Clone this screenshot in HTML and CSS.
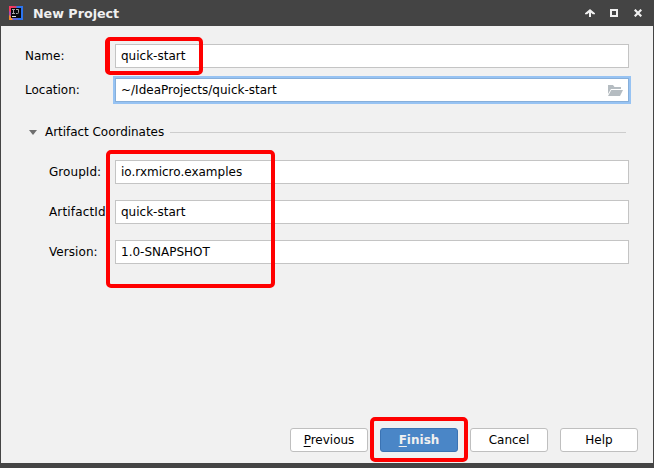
FILE: index.html
```html
<!DOCTYPE html>
<html lang="en">
<head>
<meta charset="utf-8">
<title>New Project</title>
<link rel="stylesheet" href="styles.css">
</head>
<body>
<div class="window">
  <header class="titlebar">
    <svg class="logo" width="14" height="14" viewBox="0 0 14 14">
      <defs>
        <linearGradient id="rim" x1="0" y1="0" x2="1" y2="0">
          <stop offset="0" stop-color="#fb3a5e"/><stop offset=".45" stop-color="#e8385f"/><stop offset=".6" stop-color="#2c74ee"/><stop offset="1" stop-color="#2c74ee"/>
        </linearGradient>
      </defs>
      <rect width="14" height="14" fill="url(#rim)"/>
      <path d="M0 5l3 2v3l-3 1z" fill="#b04ab0"/>
      <path d="M0 9l3 2 1 3H0z" fill="#f48a2c"/>
      <path d="M3 12h6v2H4z" fill="#5a62d8"/>
      <rect x="2" y="2" width="10" height="10" fill="#08080c"/>
      <path d="M3 3.5h3M4.5 3.5v4M3 7.5h3M7 3.5h2.5v3q0 1-1 1H7" fill="none" stroke="#a4a4a8"/>
      <path d="M3 10.5h4" stroke="#ddd"/>
    </svg>
    <h1 class="title">New Project</h1>
    <div class="controls">
      <svg class="shade" width="10" height="8" viewBox="0 0 10 8"><path d="M5 0l5 4.3v.9H7.8L6 3.8V8H4V3.8L2.2 5.2H0v-.9z" fill="#f0f0f0"/></svg>
      <svg width="8" height="8" viewBox="0 0 8 8"><path d="M1 1h6v6H1z" fill="none" stroke="#f0f0f0" stroke-width="2"/></svg>
      <svg width="8" height="8" viewBox="0 0 8 8"><path d="M.7.7l6.6 6.6M7.3.7L.7 7.3" stroke="#f0f0f0" stroke-width="2.2"/></svg>
    </div>
  </header>
  <main class="content">
    <div class="row"><span class="label">Name:</span><div class="field">quick-start</div></div>
    <div class="row location"><span class="label">Location:</span>
      <div class="field focused">~/IdeaProjects/quick-start
        <svg class="folder" width="15" height="11" viewBox="0 0 15 11"><path d="M0 0h5l1.5 2H13v2H3L0 9z" fill="#b5bcc1"/><path d="M3.3 5H15l-3 6H0z" fill="#b5bcc1"/></svg>
      </div>
    </div>
    <div class="section">
      <svg width="8" height="5" viewBox="0 0 8 5"><path d="M0 0h8L4 5z" fill="#6e6e6e"/></svg>
      <span>Artifact Coordinates</span>
      <div class="rule"></div>
    </div>
    <div class="coordinates">
      <div class="row"><span class="label">GroupId:</span><div class="field">io.rxmicro.examples</div></div>
      <div class="row"><span class="label artifact">ArtifactId:</span><div class="field">quick-start</div></div>
      <div class="row"><span class="label">Version:</span><div class="field">1.0-SNAPSHOT</div></div>
    </div>
  </main>
  <footer class="buttons">
    <div class="button"><span><u>P</u>revious</span></div>
    <div class="button primary"><span><u>F</u>inish</span></div>
    <div class="button">Cancel</div>
    <div class="button">Help</div>
  </footer>
  <div class="mark mark-name"></div>
  <div class="mark mark-coordinates"></div>
  <div class="mark mark-finish"></div>
</div>
</body>
</html>
```
FILE: styles.css
```css
* { box-sizing: border-box; }
body { margin: 0; }
.window {
  position: relative;
  display: flex;
  flex-direction: column;
  width: 654px;
  height: 468px;
  background: #f1f1f1;
  border: solid #444;
  border-width: 0 1px 5px;
  font: 12px/15px "DejaVu Sans", sans-serif;
  color: #000;
  overflow: hidden;
}
.titlebar {
  display: flex;
  align-items: center;
  height: 26px;
  padding: 0 11px 0 8px;
  background: #444;
}
.title { flex: 1; margin: 0 0 0 10px; font-size: 12.7px; line-height: 15px; color: #f0f0f0; }
.controls { display: flex; align-items: center; gap: 16px; }
.shade { margin-right: -1px; }
svg { display: block; flex: none; }
.content { flex: 1; padding: 18px 24px 0; }
.row { display: flex; align-items: center; height: 24px; }
.label { width: 90px; white-space: nowrap; }
.field {
  flex: 1;
  display: flex;
  align-items: center;
  justify-content: space-between;
  height: 24px;
  padding: 0 5px;
  background: #fff;
  border: 1px solid #c4c4c4;
}
.location { margin-top: 10px; }
.focused { border-color: #87afda; box-shadow: 0 0 0 2px #97c3f3; }
.section { display: flex; align-items: center; height: 16px; margin: 22px 3px 20px 4px; }
.section span { margin: 0 6px 0 8px; letter-spacing: -.04px; }
.rule { flex: 1; height: 1px; background: #cdcdcd; }
.coordinates { display: grid; gap: 16px; padding-left: 24px; }
.coordinates .label { width: 66px; letter-spacing: .06px; }
.coordinates .artifact { letter-spacing: .16px; }
.buttons { display: flex; justify-content: flex-end; gap: 12px; padding: 0 15px 11px; }
.button {
  display: flex;
  align-items: center;
  justify-content: center;
  width: 78px;
  height: 24px;
  background: #fff;
  border: 1px solid #bfbfbf;
  border-radius: 3px;
}
.button u { text-underline-offset: 2px; }
.primary { background: #4a86c7; border-color: #3b73b3; color: #f0f0f0; font-weight: bold; }
.mark { position: absolute; border: 4px solid #f00; border-radius: 5px; }
.mark-name { left: 104px; top: 37px; width: 98px; height: 38px; border-width: 4px 4px 4px 5px; }
.mark-coordinates { left: 105px; top: 150px; width: 169px; height: 138px; }
.mark-finish { left: 369px; top: 417px; width: 98px; height: 45px; }
```
